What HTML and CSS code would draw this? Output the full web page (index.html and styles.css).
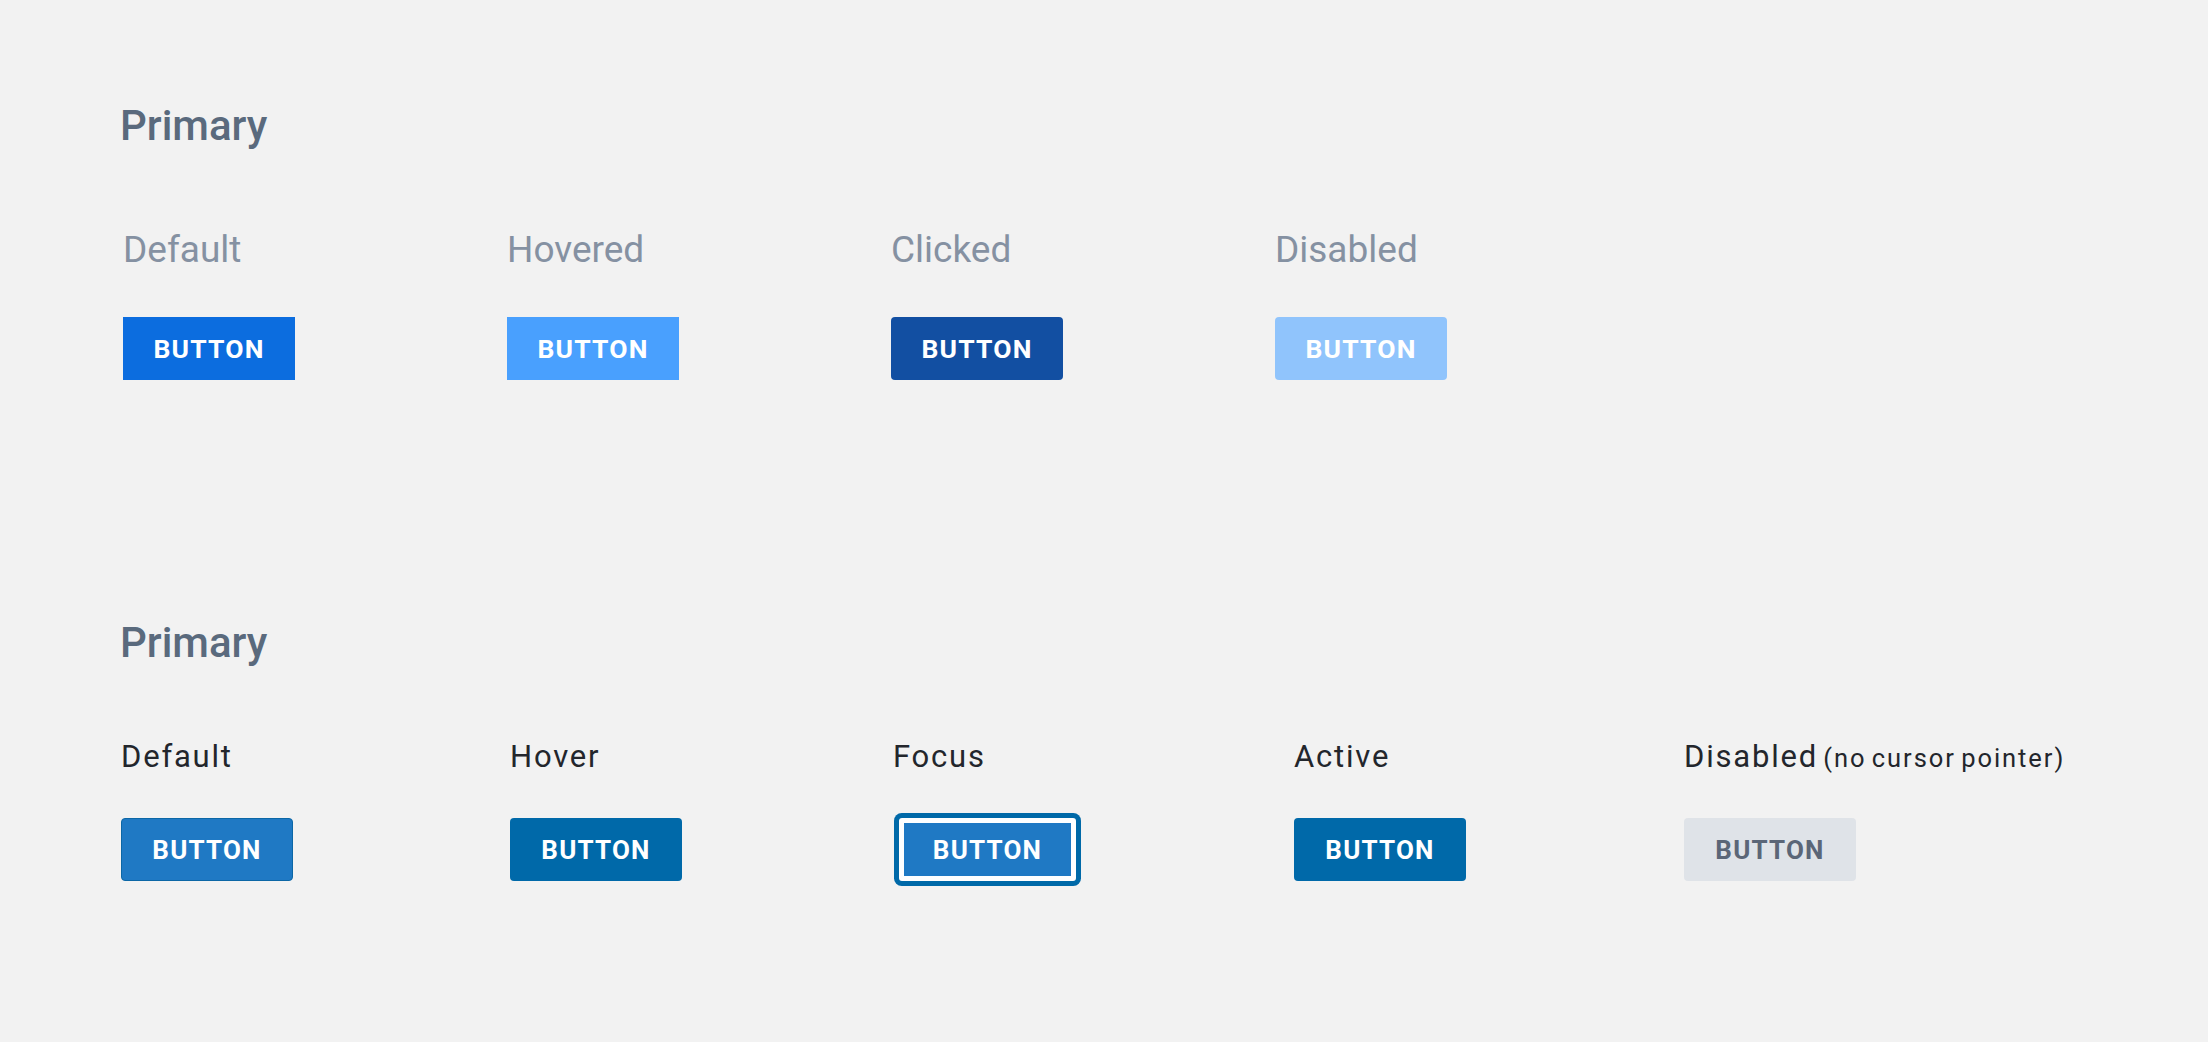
FILE: index.html
```html
<!DOCTYPE html>
<html lang="en">
<head>
<meta charset="utf-8">
<title>Primary buttons</title>
<link rel="stylesheet" href="styles.css">
</head>
<body>
<main class="page">
  <section class="group group--legacy">
    <h2 class="group__title">Primary</h2>
    <div class="states states--legacy">
      <div class="state">
        <div class="state__label">Default</div>
        <button class="btn btn-legacy btn-legacy--default" type="button">BUTTON</button>
      </div>
      <div class="state">
        <div class="state__label">Hovered</div>
        <button class="btn btn-legacy btn-legacy--hovered" type="button">BUTTON</button>
      </div>
      <div class="state">
        <div class="state__label">Clicked</div>
        <button class="btn btn-legacy btn-legacy--clicked" type="button">BUTTON</button>
      </div>
      <div class="state">
        <div class="state__label">Disabled</div>
        <button class="btn btn-legacy btn-legacy--disabled" type="button">BUTTON</button>
      </div>
    </div>
  </section>

  <section class="group group--new">
    <h2 class="group__title">Primary</h2>
    <div class="states states--new">
      <div class="state">
        <div class="state__label">Default</div>
        <button class="btn btn-new btn-new--default" type="button">BUTTON</button>
      </div>
      <div class="state">
        <div class="state__label">Hover</div>
        <button class="btn btn-new btn-new--hover" type="button">BUTTON</button>
      </div>
      <div class="state state--focus">
        <div class="state__label">Focus</div>
        <button class="btn btn-new btn-new--focus" type="button">BUTTON</button>
      </div>
      <div class="state">
        <div class="state__label">Active</div>
        <button class="btn btn-new btn-new--active" type="button">BUTTON</button>
      </div>
      <div class="state">
        <div class="state__label">Disabled<span class="state__note"> (no cursor pointer)</span></div>
        <button class="btn btn-new btn-new--disabled" type="button">BUTTON</button>
      </div>
    </div>
  </section>
</main>
</body>
</html>
```
FILE: styles.css
```css
html, body {
  margin: 0;
  padding: 0;
}

body {
  background: #f2f2f2;
  font-family: Roboto, "Liberation Sans", Arial, sans-serif;
  width: 2208px;
  height: 1042px;
  overflow: hidden;
}

.page {
  padding: 105px 0 0 120px;
  display: flex;
  flex-direction: column;
  gap: 242px;
}

.group {
  display: flex;
  flex-direction: column;
}

.group__title {
  margin: 0;
  font-size: 42px;
  line-height: 42px;
  font-weight: 500;
  color: #5a6a7d;
}

.group--legacy .group__title {
  margin-bottom: 84px;
}

.group--new .group__title {
  margin-bottom: 77px;
}

/* state grids */
.states {
  display: grid;
}

.states--legacy {
  padding-left: 3px;
  grid-template-columns: 384px 384px 384px 384px;
}

.states--new {
  padding-left: 1px;
  grid-template-columns: 389px 383px 401px 390px auto;
}

.state {
  display: flex;
  flex-direction: column;
  align-items: flex-start;
}

.states--legacy .state {
  gap: 49px;
}

.states--new .state {
  gap: 46px;
}

.states--legacy .state__label {
  font-size: 37px;
  line-height: 37px;
  letter-spacing: 0;
  color: #8591a2;
  white-space: nowrap;
}

.states--new .state__label {
  font-size: 31px;
  line-height: 31px;
  height: 31px;
  letter-spacing: 1.8px;
  color: #23262c;
  white-space: nowrap;
}

.state__note {
  font-size: 25.5px;
  line-height: 1;
  letter-spacing: 1.95px;
  word-spacing: -3px;
}

/* buttons */
.btn {
  box-sizing: border-box;
  width: 172px;
  height: 63px;
  margin: 0;
  padding: 0;
  border: 0;
  display: flex;
  align-items: center;
  justify-content: center;
  font-family: Roboto, "Liberation Sans", Arial, sans-serif;
  font-size: 26.5px;
  font-weight: 700;
  letter-spacing: 1.2px;
  color: #ffffff;
  cursor: pointer;
}

.btn-legacy--default {
  background: #0c6ddf;
}

.btn-legacy--hovered {
  background: #49a0fe;
}

.btn-legacy--clicked {
  background: #124fa2;
  border-radius: 4px;
}

.btn-legacy--disabled {
  background: #90c4fc;
  border-radius: 4px;
  cursor: default;
}

.btn-new {
  font-size: 26px;
  border-radius: 4px;
}

.btn-new--default {
  background: #1f79c4;
  border: 1px solid #0c67a6;
}

.btn-new--hover,
.btn-new--active {
  background: #0069a9;
}

.btn-new--focus {
  width: 177px;
  margin-left: 6px;
  background: #1f79c4;
  border: 5px solid #ffffff;
  border-radius: 3px;
  box-shadow: 0 0 0 5px #0069a8;
}

.btn-new--disabled {
  background: #dfe3e8;
  color: #5b6677;
  cursor: default;
}
```
